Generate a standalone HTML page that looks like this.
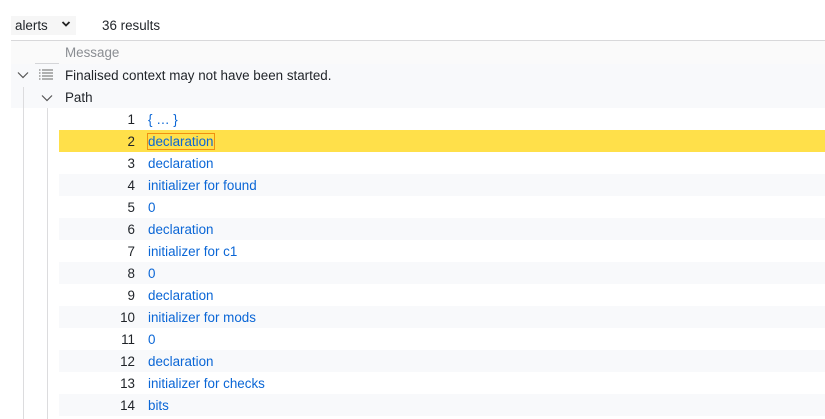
<!DOCTYPE html>
<html><head><style>
body{margin:0;width:825px;height:419px;overflow:hidden;background:#fff;font-family:"Liberation Sans",sans-serif;font-size:13.4px;color:#1f2328;position:relative}
.a{position:absolute}
.row{position:absolute;left:59px;right:0;height:22px}
.n{position:absolute;width:76px;text-align:right;left:59px;line-height:22px;margin-top:1px}
.t{position:absolute;left:148px;line-height:22px;color:#0a66d6;margin-top:1px}
</style></head><body>
<div class="a" style="left:11px;top:16px;width:65px;height:19px;background:#f6f6f6"></div>
<div class="a" style="left:15px;top:17px;line-height:17px">alerts</div>
<svg class="a" style="left:61px;top:20px" width="10" height="8"><path d="M1.5 2 L5 5.5 L8.5 2" fill="none" stroke="#222" stroke-width="1.8"/></svg>
<div class="a" style="left:102px;top:17px;line-height:17px">36 results</div>
<div class="a" style="left:11px;right:0;top:40px;height:23px;background:#fafafa;border-top:1px solid #d8d8da;border-bottom:1px solid #aeb0b5"></div>
<div class="a" style="left:11px;width:24px;top:63px;height:1px;background:#fafafa"></div>
<div class="a" style="left:35px;width:24px;top:63px;height:1px;background:#d4d5d8"></div>
<div class="a" style="left:65px;top:44px;line-height:17px;color:#8a8d92">Message</div>
<div class="a" style="left:11px;right:0;top:64px;height:44px;background:#f8f9fb"></div>
<svg class="a" style="left:17px;top:71px" width="12" height="8"><path d="M1 1.5 L6 6.5 L11 1.5" fill="none" stroke="#555" stroke-width="1.2"/></svg>
<svg class="a" style="left:39px;top:69px" width="14" height="12" fill="#666"><rect x="0" y="0.5" width="1.5" height="1"/><rect x="3" y="0.5" width="11" height="1"/><rect x="0" y="3.5" width="1.5" height="1"/><rect x="3" y="3.5" width="11" height="1"/><rect x="0" y="6.5" width="1.5" height="1"/><rect x="3" y="6.5" width="11" height="1"/><rect x="0" y="9.5" width="1.5" height="1"/><rect x="3" y="9.5" width="11" height="1"/></svg>
<div class="a" style="left:65px;top:67px;line-height:18px">Finalised context may not have been started.</div>
<svg class="a" style="left:41px;top:94px" width="12" height="8"><path d="M1 1.5 L6 6.5 L11 1.5" fill="none" stroke="#555" stroke-width="1.2"/></svg>
<div class="a" style="left:65px;top:89px;line-height:18px">Path</div>
<div class="a" style="left:23px;top:87px;width:1px;height:332px;background:#dcdcde"></div>
<div class="a" style="left:47px;top:108px;width:1px;height:311px;background:#dcdcde"></div>

<div class="row" style="top:130px;background:#ffe04a"></div>
<div class="row" style="top:174px;background:#f8f9fb"></div>
<div class="row" style="top:218px;background:#f8f9fb"></div>
<div class="row" style="top:262px;background:#f8f9fb"></div>
<div class="row" style="top:306px;background:#f8f9fb"></div>
<div class="row" style="top:350px;background:#f8f9fb"></div>
<div class="row" style="top:394px;background:#f8f9fb"></div>

<div class="n" style="top:108px">1</div><div class="t" style="top:108px">{ … }</div>
<div class="n" style="top:130px">2</div><div class="t" style="top:130px"><span style="outline:1px solid #f0900f">declaration</span></div>
<div class="n" style="top:152px">3</div><div class="t" style="top:152px">declaration</div>
<div class="n" style="top:174px">4</div><div class="t" style="top:174px">initializer for found</div>
<div class="n" style="top:196px">5</div><div class="t" style="top:196px">0</div>
<div class="n" style="top:218px">6</div><div class="t" style="top:218px">declaration</div>
<div class="n" style="top:240px">7</div><div class="t" style="top:240px">initializer for c1</div>
<div class="n" style="top:262px">8</div><div class="t" style="top:262px">0</div>
<div class="n" style="top:284px">9</div><div class="t" style="top:284px">declaration</div>
<div class="n" style="top:306px">10</div><div class="t" style="top:306px">initializer for mods</div>
<div class="n" style="top:328px">11</div><div class="t" style="top:328px">0</div>
<div class="n" style="top:350px">12</div><div class="t" style="top:350px">declaration</div>
<div class="n" style="top:372px">13</div><div class="t" style="top:372px">initializer for checks</div>
<div class="n" style="top:394px">14</div><div class="t" style="top:394px">bits</div>
</body></html>
